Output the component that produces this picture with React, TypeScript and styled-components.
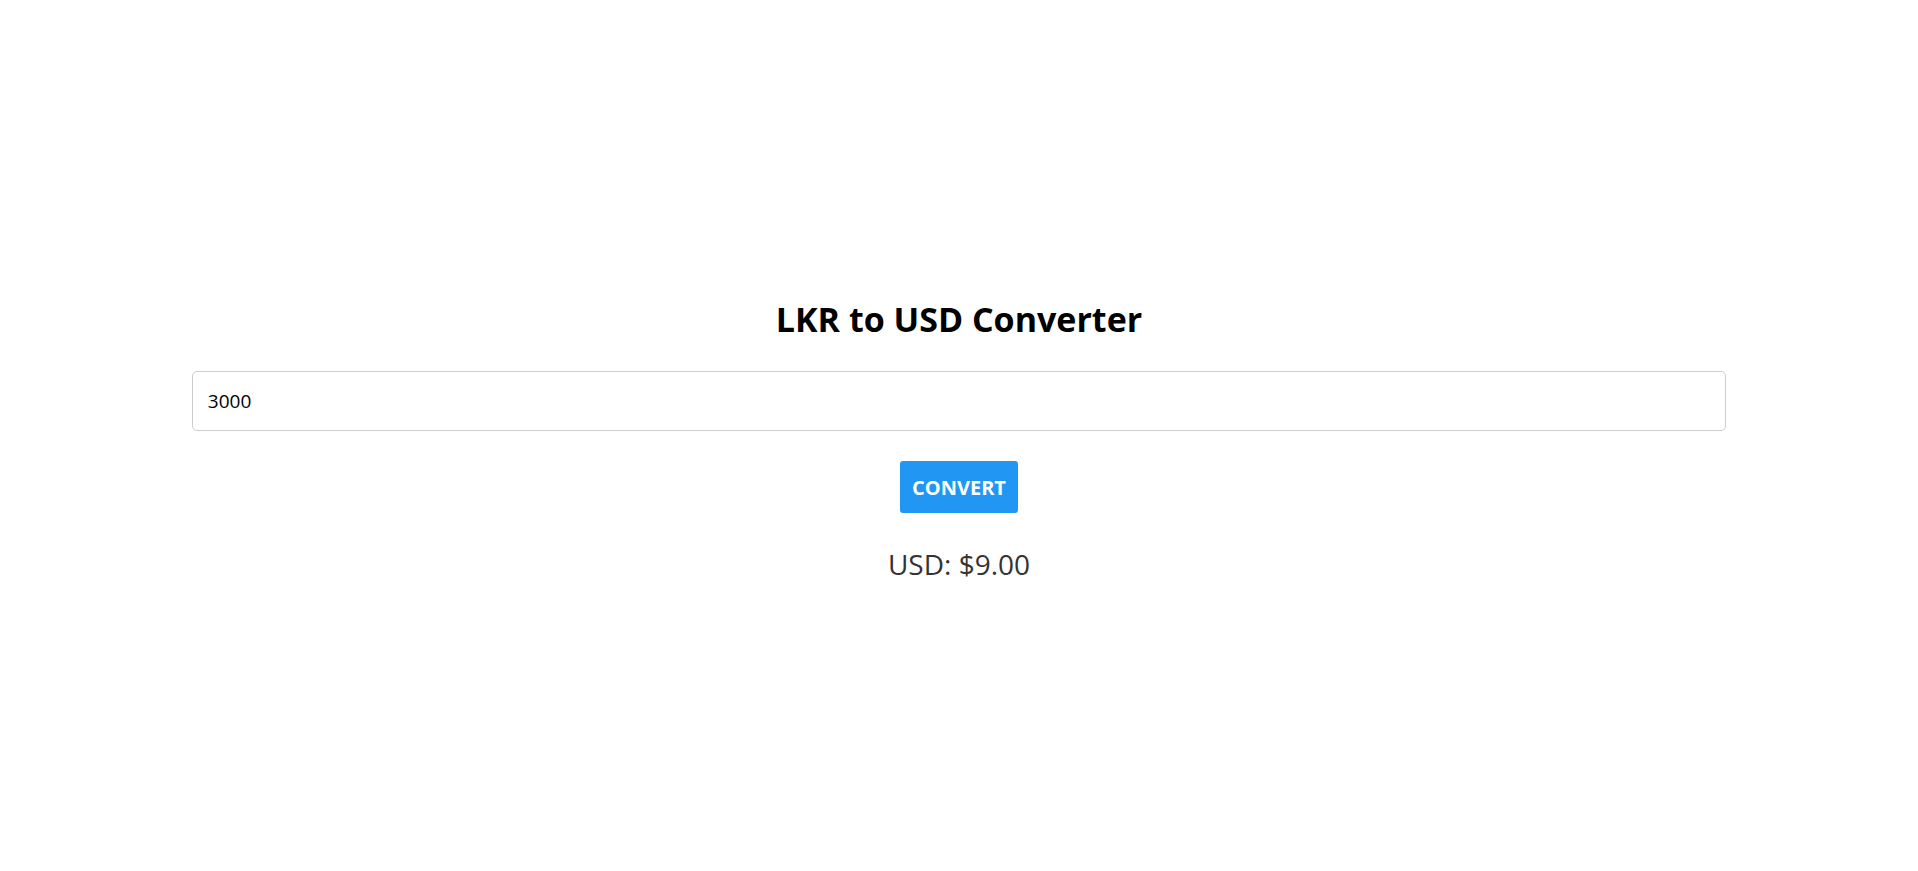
import React, { useState } from "react";
import styled, { createGlobalStyle } from "styled-components";

const GlobalStyle = createGlobalStyle`
  html, body { margin: 0; padding: 0; background: #ffffff; }
  body { font-family: "Open Sans", "Noto Sans", Arial, sans-serif; }
  * { box-sizing: border-box; }
`;

const Page = styled.div`
  min-height: 100vh;
  padding-top: 296px;
  display: flex;
  justify-content: center;
`;

const Converter = styled.div`
  width: 80%;
  display: flex;
  flex-direction: column;
  align-items: center;
`;

const Title = styled.h1`
  margin: 0 0 29px;
  font-size: 34px;
  line-height: 46px;
  font-weight: 700;
  color: #000;
`;

const AmountInput = styled.input`
  width: 100%;
  height: 60px;
  padding: 0 15px;
  font-family: inherit;
  font-size: 19px;
  color: #000;
  border: 1px solid #cccccc;
  border-radius: 5px;
  outline: none;
`;

const ConvertButton = styled.button`
  margin-top: 30px;
  height: 52px;
  padding: 0 12px;
  background: #2196f3;
  color: #ffffff;
  border: none;
  border-radius: 3px;
  font-family: inherit;
  font-size: 20px;
  font-weight: 700;
  cursor: pointer;
`;

const Result = styled.p`
  margin: 32px 0 0;
  font-size: 28px;
  line-height: 38px;
  color: #333333;
`;

export default function App() {
  const [amount, setAmount] = useState("3000");
  const [usd, setUsd] = useState("9.00");
  return (
    <>
      <GlobalStyle />
      <Page>
        <Converter>
          <Title>LKR to USD Converter</Title>
          <AmountInput value={amount} onChange={(e) => setAmount(e.target.value)} />
          <ConvertButton onClick={() => setUsd(((parseFloat(amount) || 0) * 0.003).toFixed(2))}>
            CONVERT
          </ConvertButton>
          <Result>USD: ${usd}</Result>
        </Converter>
      </Page>
    </>
  );
}
